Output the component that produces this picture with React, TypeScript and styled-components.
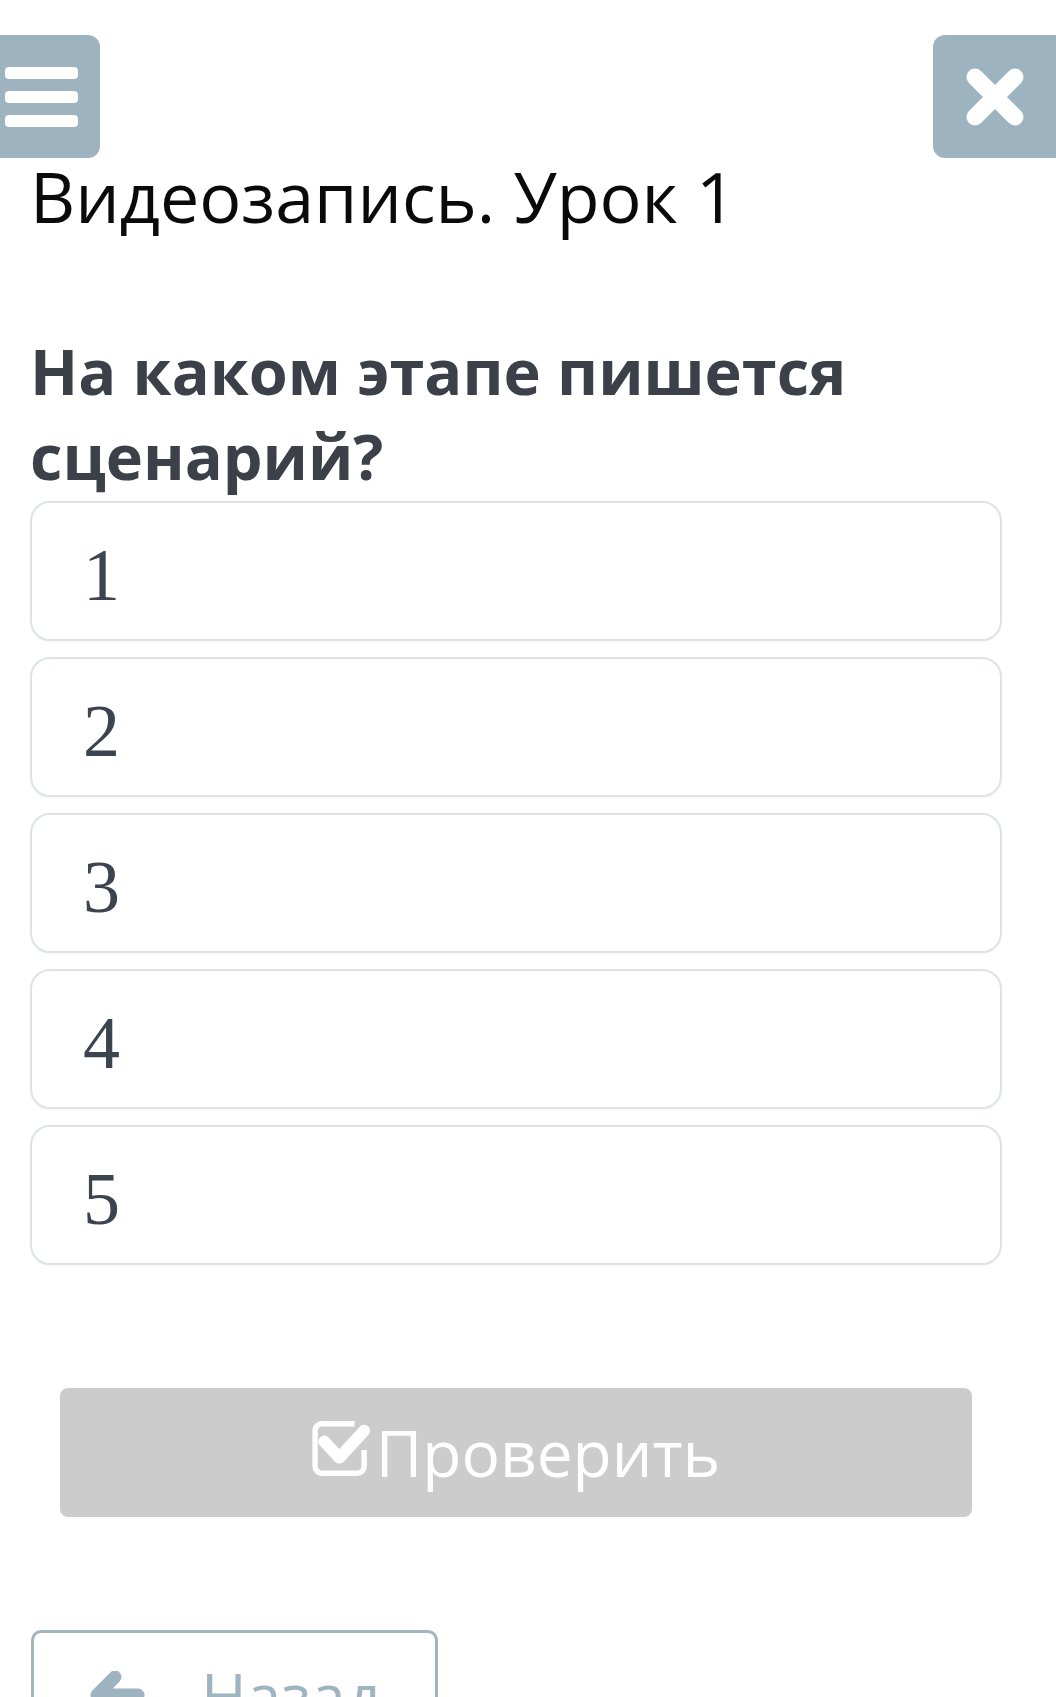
import React from 'react';
import styled, { createGlobalStyle } from 'styled-components';

const colors = {
  slate: '#9eb3c0',
  slateText: '#9fb3c0',
  title: '#0a0a0a',
  question: '#3b4049',
  digit: '#3c4450',
  border: '#dfe3e5',
  disabled: '#cccccc',
  white: '#ffffff',
};

const GlobalStyle = createGlobalStyle`
  html, body {
    margin: 0;
    padding: 0;
    overflow: hidden;
    background: ${colors.white};
    font-family: "Open Sans", "Noto Sans", sans-serif;
  }
`;

const options = ['1', '2', '3', '4', '5'];

const App = () => {
  return (
    <Page>
      <GlobalStyle />

      <TopBar>
        <MenuButton aria-label="menu">
          <MenuLine />
          <MenuLine />
          <MenuLine />
        </MenuButton>
        <CloseButton aria-label="close">
          <svg width="60" height="60" viewBox="0 0 60 60">
            <path
              d="M10 10 L50 50 M50 10 L10 50"
              stroke={colors.white}
              strokeWidth="17"
              strokeLinecap="round"
            />
          </svg>
        </CloseButton>
      </TopBar>

      <Content>
        <Title>Видеозапись. Урок 1</Title>

        <Question>На каком этапе пишется сценарий?</Question>

        <OptionList>
          {options.map((o) => (
            <Option key={o}>{o}</Option>
          ))}
        </OptionList>

        <CheckButton disabled>
          <svg width="59" height="55" viewBox="0 0 54 51">
            <path
              d="M39 2.5 H9 A6.5 6.5 0 0 0 2.5 9 V42 A6.5 6.5 0 0 0 9 48.5 H41.5 A6.5 6.5 0 0 0 48 42 V27"
              fill="none"
              stroke={colors.white}
              strokeWidth="5"
            />
            <path
              d="M11 19 L25 34 L48 9"
              fill="none"
              stroke={colors.white}
              strokeWidth="11"
              strokeLinecap="round"
              strokeLinejoin="round"
            />
          </svg>
          <span>Проверить</span>
        </CheckButton>

        <BackButton>
          <svg width="56" height="48" viewBox="0 0 56 48">
            <path
              d="M26 6 L8 24 L26 42 M10 24 H49"
              fill="none"
              stroke={colors.slate}
              strokeWidth="13"
              strokeLinecap="round"
              strokeLinejoin="round"
            />
          </svg>
          <span>Назад</span>
        </BackButton>
      </Content>
    </Page>
  );
};

const Page = styled.div`
  width: 1056px;
  height: 1697px;
  overflow: hidden;
`;

const TopBar = styled.div`
  display: flex;
  justify-content: space-between;
  padding-top: 35px;
`;

const MenuButton = styled.div`
  width: 100px;
  height: 123px;
  box-sizing: border-box;
  background: ${colors.slate};
  border-radius: 0 12px 12px 0;
  display: flex;
  flex-direction: column;
  justify-content: center;
  gap: 12px;
  padding-left: 5px;
`;

const MenuLine = styled.div`
  width: 73px;
  height: 12px;
  border-radius: 4px;
  background: ${colors.white};
`;

const CloseButton = styled.div`
  width: 123px;
  height: 123px;
  background: ${colors.slate};
  border-radius: 12px 0 0 12px;
  display: flex;
  align-items: center;
  justify-content: center;
`;

const Content = styled.div`
  padding: 0 54px 0 30px;
`;

const Title = styled.h1`
  margin: 3px 0 0;
  font-size: 70px;
  line-height: 1;
  font-weight: 400;
  color: ${colors.title};
`;

const Question = styled.h2`
  margin: 97px 0 0;
  font-size: 63px;
  line-height: 85px;
  font-weight: 700;
  color: ${colors.question};
`;

const OptionList = styled.div`
  display: flex;
  flex-direction: column;
  gap: 16px;
  margin-top: 3px;
`;

const Option = styled.div`
  height: 140px;
  box-sizing: border-box;
  border: 2px solid ${colors.border};
  border-radius: 20px;
  box-shadow: 0 1px 2px rgba(0, 0, 0, 0.05);
  display: flex;
  align-items: center;
  padding: 8px 0 0 51px;
  font-family: "Liberation Serif", "Times New Roman", serif;
  font-size: 74px;
  line-height: 1;
  color: ${colors.digit};
`;

const CheckButton = styled.button`
  display: flex;
  align-items: center;
  justify-content: center;
  gap: 5px;
  width: 912px;
  height: 129px;
  margin: 123px 0 0 30px;
  border: none;
  border-radius: 8px;
  background: ${colors.disabled};
  color: ${colors.white};
  font-family: "Open Sans", sans-serif;
  font-size: 64px;
  line-height: 1;
  padding: 0;

  & svg {
    margin-top: -8px;
  }
`;

const BackButton = styled.button`
  display: flex;
  align-items: center;
  gap: 56px;
  width: 407px;
  height: 130px;
  margin: 113px 0 0 1px;
  box-sizing: border-box;
  border: 3px solid #a3b4be;
  border-radius: 10px;
  background: ${colors.white};
  color: ${colors.slateText};
  font-family: "Open Sans", sans-serif;
  font-size: 62px;
  line-height: 1;
  padding: 0 0 0 55px;
`;

export default App;
